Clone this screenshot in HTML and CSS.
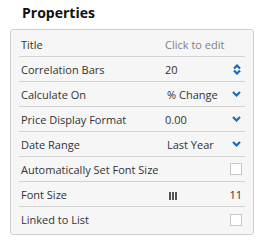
FILE: index.html
```html
<!DOCTYPE html>
<html lang="en">
<head>
    <meta charset="UTF-8">
    <title>Properties</title>
    <link rel="stylesheet" href="styles.css">
</head>
<body>
    <div class="wrap">
        <h2 class="heading">Properties</h2>

        <div class="panel">
            <div class="row">
                <span class="label">Title</span>
                <span class="value hint">Click to edit</span>
            </div>
            <div class="row">
                <span class="label">Correlation Bars</span>
                <span class="value">20</span>
                <svg class="icon" width="8" height="11" viewBox="0 0 8 11">
                    <path d="M1 4.5 L4 1.5 L7 4.5 M1 6.5 L4 9.5 L7 6.5" fill="none" stroke="#1c6db5" stroke-width="2.2"/>
                </svg>
            </div>
            <div class="row">
                <span class="label">Calculate On</span>
                <span class="value pad">% Change</span>
                <svg class="icon" width="9" height="6" viewBox="0 0 9 6">
                    <path d="M1 1 L4.5 4.5 L8 1" fill="none" stroke="#1c6db5" stroke-width="2.2"/>
                </svg>
            </div>
            <div class="row">
                <span class="label">Price Display Format</span>
                <span class="value">0.00</span>
                <svg class="icon" width="9" height="6" viewBox="0 0 9 6">
                    <path d="M1 1 L4.5 4.5 L8 1" fill="none" stroke="#1c6db5" stroke-width="2.2"/>
                </svg>
            </div>
            <div class="row">
                <span class="label">Date Range</span>
                <span class="value pad">Last Year</span>
                <svg class="icon" width="9" height="6" viewBox="0 0 9 6">
                    <path d="M1 1 L4.5 4.5 L8 1" fill="none" stroke="#1c6db5" stroke-width="2.2"/>
                </svg>
            </div>
            <div class="row">
                <span class="label">Automatically Set Font Size</span>
                <span class="check"></span>
            </div>
            <div class="row">
                <span class="label">Font Size</span>
                <span class="value">
                    <span class="grip"><i></i><i></i><i></i></span>
                </span>
                <span class="num">11</span>
            </div>
            <div class="row">
                <span class="label">Linked to List</span>
                <span class="check"></span>
            </div>
        </div>
    </div>
</body>
</html>
```

FILE: styles.css
```css
* {
    margin: 0;
    padding: 0;
    box-sizing: border-box;
}

body {
    background: #fff;
    font-family: 'Open Sans', sans-serif;
    color: #333;
}

.wrap {
    padding: 3px 11px 0 10px;
}

.heading {
    font-size: 14px;
    font-weight: bold;
    color: #111;
    line-height: 20px;
    padding-left: 12px;
    margin-bottom: 6px;
}

.panel {
    background: #f6f6f6;
    border: 1px solid #cfcfcf;
    border-radius: 3px;
    padding: 2px 8px 2px 8px;
}

.row {
    display: flex;
    align-items: center;
    height: 25px;
    padding: 0 2px;
    border-bottom: 1px solid #d2d2d2;
    font-size: 11px;
}

.row:last-child {
    border-bottom: none;
}

.label {
    width: 144px;
    flex-shrink: 0;
}

.value {
    flex: 1;
}

.value.pad {
    padding-left: 2px;
}

.hint {
    color: #808080;
}

.icon {
    display: block;
    margin-right: 2px;
}

.check {
    margin-left: auto;
    width: 12px;
    height: 12px;
    border: 1px solid #c8c8c8;
    background: #fff;
    margin-right: 1px;
}

.grip {
    display: inline-flex;
    gap: 1px;
    margin-left: 4px;
    vertical-align: middle;
}

.grip i {
    display: block;
    width: 2px;
    height: 8px;
    background: #555;
}

.num {
    margin-right: 1px;
}
```
